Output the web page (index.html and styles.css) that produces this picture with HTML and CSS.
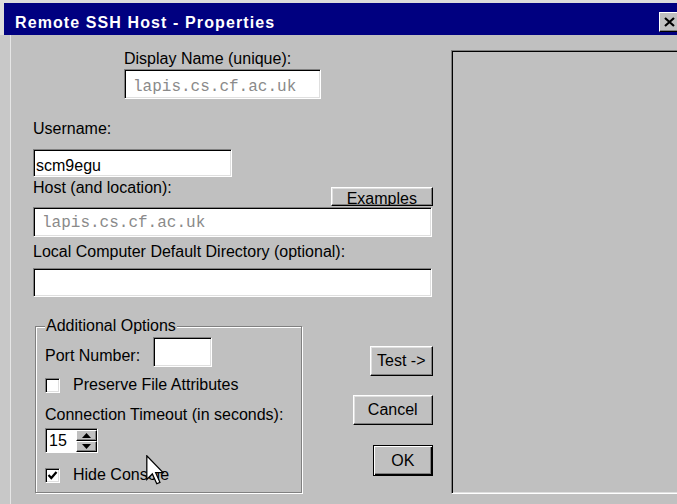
FILE: index.html
```html
<!DOCTYPE html>
<html lang="en">
<head>
<meta charset="utf-8">
<title>Remote SSH Host - Properties</title>
<link rel="stylesheet" href="styles.css">
</head>
<body>
<div class="dialog">
  <div class="caption-strip">
    <div class="titlebar">
      <span class="title">Remote SSH Host - Properties</span>
      <button class="close-btn" aria-label="Close">
        <svg width="11" height="10" viewBox="0 0 11 10"><path d="M1 1 L10 9 M10 1 L1 9" stroke="#000" stroke-width="2.2" fill="none"/></svg>
      </button>
    </div>
  </div>

  <div class="client">
    <div class="form">
      <div class="display-block">
        <div class="label">Display Name (unique):</div>
        <div class="field field-display mono">lapis.cs.cf.ac.uk</div>
      </div>

      <div class="label username-label">Username:</div>
      <div class="field field-user">scm9egu</div>

      <div class="host-row">
        <div class="label">Host (and location):</div>
        <button class="btn btn-examples">Examples</button>
      </div>
      <div class="field field-host mono">lapis.cs.cf.ac.uk</div>

      <div class="label local-label">Local Computer Default Directory (optional):</div>
      <div class="field field-local"></div>

      <div class="bottom-row">
        <div class="group">
          <div class="group-title">Additional Options</div>

          <div class="port-row">
            <span class="label">Port Number:</span>
            <div class="field field-port"></div>
          </div>

          <div class="check-row preserve">
            <span class="checkbox"></span>
            <span>Preserve File Attributes</span>
          </div>

          <div class="label timeout-label">Connection Timeout (in seconds):</div>
          <div class="spin">
            <div class="spin-value">15</div>
            <div class="spin-btns">
              <span class="spin-btn"><svg width="9" height="5" viewBox="0 0 9 5"><path d="M4.5 0 L9 5 L0 5 Z" fill="#000"/></svg></span>
              <span class="spin-btn"><svg width="9" height="5" viewBox="0 0 9 5"><path d="M0 0 L9 0 L4.5 5 Z" fill="#000"/></svg></span>
            </div>
          </div>

          <div class="check-row hide">
            <span class="checkbox">
              <svg width="11" height="11" viewBox="0 0 11 11"><polyline points="1.5,5 4.3,8 9.5,2" fill="none" stroke="#000" stroke-width="2.2"/></svg>
            </span>
            <span>Hide Console</span>
          </div>
        </div>

        <div class="actions">
          <button class="btn btn-test">Test -&gt;</button>
          <button class="btn btn-cancel">Cancel</button>
          <button class="btn btn-ok">OK</button>
        </div>
      </div>
    </div>

    <div class="preview"></div>
  </div>

  <!-- mouse pointer resting over the Hide Console checkbox label -->
  <svg class="pointer" width="19" height="30" viewBox="0 0 12 19">
    <path d="M0.5 0.5 L0.5 15.5 L4 12 L6.8 18.2 L8.8 17.3 L6.1 11.2 L10.8 11.2 Z" fill="#fff" stroke="#000" stroke-width="0.8" stroke-linejoin="miter"/>
  </svg>
</div>
</body>
</html>
```

FILE: styles.css
```css
html, body {
  margin: 0;
  padding: 0;
}

body {
  width: 677px;
  height: 504px;
  overflow: hidden;
  background: #c0c0c0;
  font-family: "Liberation Sans", Arial, sans-serif;
  font-size: 16px;
  line-height: 18px;
  color: #000;
}

.dialog {
  position: relative;
  width: 700px;
  height: 504px;
}

/* window caption */
.caption-strip {
  background: #dcdcdc;
  padding: 3px 0 0 4px;
}

.titlebar {
  display: flex;
  align-items: flex-start;
  height: 32px;
  background: #000080;
}

.title {
  color: #fff;
  font-weight: bold;
  letter-spacing: 1.1px;
  line-height: 20px;
  padding: 10px 0 0 11px;
  white-space: nowrap;
}

.close-btn {
  margin: 9px 19px 0 auto;
  width: 22px;
  height: 20px;
  box-sizing: border-box;
  padding: 0 0 0 4px;
  display: flex;
  align-items: center;
  background: #c0c0c0;
  border: 1px solid;
  border-color: #fff #000 #000 #fff;
  box-shadow: inset -1px -1px #808080;
}

/* client area */
.client {
  display: flex;
  align-items: flex-start;
  height: 469px;
  background: linear-gradient(to right, #c8c8c8 10px, #c0c0c0 10px);
}

.form {
  margin-left: 10px;
  border-left: 1px solid #e6e6e6;
  width: 401px;
  padding: 15px 18px 0 22px;
  height: 454px;
}

.label {
  display: block;
  line-height: 18px;
  white-space: nowrap;
}

.mono {
  font-family: "Liberation Mono", "Courier New", monospace;
  color: #8a8a8a;
}

/* sunken edit boxes */
.field {
  box-sizing: border-box;
  background: #fff;
  border: 1px solid;
  border-color: #808080 #fff #fff #808080;
  box-shadow: inset 1px 1px #000, inset -1px -1px #dfdfdf;
  line-height: 18px;
  white-space: nowrap;
  overflow: hidden;
}

.display-block {
  margin-left: 91px;
}

.field-display {
  width: 197px;
  height: 30px;
  margin-top: 1px;
  padding: 8px 0 0 8px;
}

.username-label {
  margin-top: 21px;
}

.field-user {
  width: 199px;
  height: 28px;
  margin-top: 11px;
  padding: 7px 0 0 2px;
}

.host-row {
  display: flex;
  justify-content: space-between;
  align-items: flex-start;
  margin-top: 2px;
}

.field-host {
  width: 399px;
  height: 30px;
  margin-top: 1px;
  padding: 6px 0 0 8px;
}

.local-label {
  margin-top: 6px;
}

.field-local {
  width: 399px;
  height: 29px;
  margin-top: 7px;
}

/* raised push buttons */
.btn {
  box-sizing: border-box;
  font: inherit;
  line-height: 18px;
  color: #000;
  background: #c0c0c0;
  border: 1px solid;
  border-color: #fff #000 #000 #fff;
  box-shadow: inset -1px -1px #808080, inset 1px 1px #dfdfdf;
  padding: 0;
  text-align: center;
  white-space: nowrap;
}

.btn-examples {
  width: 102px;
  height: 19px;
  margin-top: 8px;
  padding-top: 2px;
  overflow: hidden;
}

.bottom-row {
  display: flex;
  justify-content: space-between;
  align-items: flex-start;
  margin-top: 29px;
}

/* etched group frame */
.group {
  box-sizing: border-box;
  width: 267px;
  margin-left: 2px;
  border: 1px solid #808080;
  box-shadow: inset 1px 1px #fff, 1px 1px #fff;
  padding: 0 0 8px 9px;
}

.group-title {
  width: max-content;
  margin-top: -10px;
  padding: 0 1px;
  background: #c0c0c0;
  line-height: 18px;
}

.port-row {
  display: flex;
  align-items: flex-start;
  margin-top: 2px;
}

.port-row .label {
  margin-top: 10px;
}

.field-port {
  width: 59px;
  height: 30px;
  margin-left: 13px;
}

.check-row {
  display: flex;
  align-items: center;
  height: 18px;
  white-space: nowrap;
}

.checkbox {
  box-sizing: border-box;
  width: 15px;
  height: 15px;
  margin-right: 13px;
  background: #fff;
  border: 1px solid;
  border-color: #808080 #fff #fff #808080;
  box-shadow: inset 1px 1px #000, inset -1px -1px #dfdfdf;
  display: flex;
  align-items: center;
  justify-content: center;
  flex: none;
}

.preserve {
  margin-top: 9px;
}

.timeout-label {
  margin-top: 12px;
}

/* spin box */
.spin {
  display: flex;
  box-sizing: border-box;
  width: 53px;
  height: 25px;
  margin-top: 4px;
  border: 1px solid;
  border-color: #808080 #fff #fff #808080;
  box-shadow: inset 1px 1px #000;
  padding: 1px 0 0 1px;
}

.spin-value {
  width: 29px;
  background: #fff;
  line-height: 22px;
  padding-left: 2px;
  box-sizing: border-box;
}

.spin-btns {
  display: flex;
  flex-direction: column;
  width: 21px;
}

.spin-btn {
  flex: 1;
  display: flex;
  align-items: center;
  justify-content: center;
  background: #c0c0c0;
  border: 1px solid;
  border-color: #fff #000 #000 #fff;
  box-shadow: inset -1px -1px #808080;
}

.hide {
  margin-top: 13px;
}

.actions {
  display: flex;
  flex-direction: column;
  align-items: flex-end;
  margin-top: 20px;
}

.btn-test {
  width: 63px;
  height: 30px;
}

.btn-cancel {
  width: 80px;
  height: 30px;
  margin-top: 19px;
}

.btn-ok {
  width: 60px;
  height: 31px;
  margin-top: 20px;
  border-color: #000;
  box-shadow: inset 1px 1px #fff, inset -1px -1px #000, inset -2px -2px #808080;
}

/* sunken preview pane */
.preview {
  box-sizing: border-box;
  width: 250px;
  height: 444px;
  margin-top: 15px;
  background: #c0c0c0;
  border: 1px solid;
  border-color: #808080 #fff #fff #808080;
  box-shadow: inset 1px 1px #000, inset -1px -1px #dfdfdf;
}

.pointer {
  position: absolute;
  left: 146px;
  top: 455px;
}
```
